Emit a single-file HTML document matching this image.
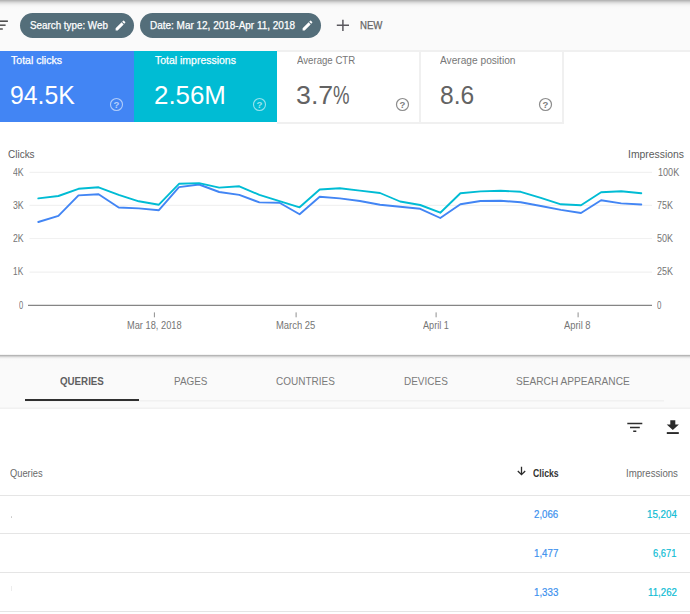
<!DOCTYPE html>
<html>
<head>
<meta charset="utf-8">
<title>Search Console - Performance</title>
<style>
*{box-sizing:border-box;margin:0;padding:0}
html,body{width:690px;height:614px;overflow:hidden;background:#fff}
body{font-family:"Liberation Sans",sans-serif;position:relative;color:#616161}
.abs{position:absolute}
.t{position:absolute;white-space:nowrap;transform-origin:0 50%}
.m{-webkit-text-stroke:0.25px currentColor}
.n{-webkit-text-stroke:0.18px currentColor}
#topbar{left:0;top:0;width:690px;height:51px;background:#fafafa}
#topshadow{left:0;top:0;width:690px;height:9px;background:linear-gradient(to bottom,#b0b0b0 0,#b6b6b6 0.5px,#c8c8c8 1.5px,#d9d9d9 2.5px,#e5e5e5 3.5px,#eeeeee 4.5px,#f4f4f4 5.5px,#f7f7f7 6.5px,#f9f9f9 7.5px,#fafafa 9px)}
.pill{top:12.5px;height:25px;border-radius:12.5px;background:#546e7a}
.card{top:51px;height:71px}
.wcard{background:#fff;border-right:2px solid #f0f0f0;border-bottom:2px solid #f0f0f0;height:72.6px}
.rowline{left:0;width:690px;height:1px;background:#e5e5e5}
</style>
</head>
<body>
<!-- top filter bar -->
<div class="abs" id="topbar"></div>
<div class="abs" id="topshadow"></div>
<svg class="abs" style="left:0;top:18px" width="12" height="14" viewBox="0 18 12 14">
  <rect x="0" y="20.4" width="7.9" height="1.6" fill="#4f4f4f"/>
  <rect x="0" y="24.4" width="5.6" height="1.6" fill="#5a5a5a"/>
  <rect x="0" y="28.2" width="2.8" height="1.6" fill="#606060"/>
</svg>
<div class="abs pill" style="left:20px;width:114px"></div>
<svg class="abs" style="left:114px;top:19px" width="13" height="13" viewBox="0 0 24 24"><path fill="#fff" d="M3 17.25V21h3.75L17.81 9.94l-3.75-3.75L3 17.25zM20.71 7.04a1 1 0 0 0 0-1.41l-2.34-2.34a1 1 0 0 0-1.41 0l-1.83 1.83 3.75 3.75 1.83-1.83z"/></svg>
<div class="abs pill" style="left:140px;width:181px"></div>
<svg class="abs" style="left:301px;top:19px" width="13" height="13" viewBox="0 0 24 24"><path fill="#fff" d="M3 17.25V21h3.75L17.81 9.94l-3.75-3.75L3 17.25zM20.71 7.04a1 1 0 0 0 0-1.41l-2.34-2.34a1 1 0 0 0-1.41 0l-1.83 1.83 3.75 3.75 1.83-1.83z"/></svg>
<svg class="abs" style="left:336px;top:19px" width="14" height="13" viewBox="336 19 14 13"><path d="M342.9 19.7V30.9M336.8 25.3H349" stroke="#5a585e" stroke-width="1.5" fill="none"/></svg>

<!-- metric cards -->
<div class="abs card" style="left:0;width:134px;background:#4285f4"></div>
<div class="abs card" style="left:134px;width:143px;background:#00bcd4"></div>
<div class="abs card wcard" style="left:277px;width:144px"></div>
<div class="abs card wcard" style="left:421px;width:143px"></div>
<div class="abs" style="left:277px;top:49.8px;width:413px;height:2px;background:#f0f0f0"></div>
<svg class="abs" style="left:109px;top:97px" width="15" height="15" viewBox="0 0 15 15"><circle cx="7.5" cy="7.5" r="6" fill="none" stroke="#fff" stroke-opacity=".58" stroke-width="1.1"/><text x="7.5" y="10.9" font-size="9.6" font-weight="bold" text-anchor="middle" fill="#fff" fill-opacity=".62" font-family="Liberation Sans">?</text></svg>
<svg class="abs" style="left:252.4px;top:97px" width="15" height="15" viewBox="0 0 15 15"><circle cx="7.5" cy="7.5" r="6" fill="none" stroke="#fff" stroke-opacity=".58" stroke-width="1.1"/><text x="7.5" y="10.9" font-size="9.6" font-weight="bold" text-anchor="middle" fill="#fff" fill-opacity=".62" font-family="Liberation Sans">?</text></svg>
<svg class="abs" style="left:394.6px;top:97px" width="15" height="15" viewBox="0 0 15 15"><circle cx="7.5" cy="7.5" r="6" fill="none" stroke="#8c8c8c" stroke-width="1.2"/><text x="7.5" y="10.9" font-size="9.6" font-weight="bold" text-anchor="middle" fill="#808080" font-family="Liberation Sans">?</text></svg>
<svg class="abs" style="left:538px;top:97px" width="15" height="15" viewBox="0 0 15 15"><circle cx="7.5" cy="7.5" r="6" fill="none" stroke="#8c8c8c" stroke-width="1.2"/><text x="7.5" y="10.9" font-size="9.6" font-weight="bold" text-anchor="middle" fill="#808080" font-family="Liberation Sans">?</text></svg>

<!-- chart -->
<svg class="abs" style="left:0;top:140px" width="690" height="200" viewBox="0 140 690 200">
  <g stroke="#f1f1f1" stroke-width="1.2">
    <path d="M29.5 172.4H652M29.5 205.4H652M29.5 238.5H652M29.5 272.1H652"/>
  </g>
  <path d="M28 305.4H652" stroke="#858585" stroke-width="1.3"/>
  <path d="M154.4 312.4V317.3M296.1 312.4V317.3M436.1 312.4V317.3M578.1 312.4V317.3" stroke="#8f8f8f" stroke-width="1"/>
  <polyline fill="none" stroke="#4285f4" stroke-width="1.9" stroke-linejoin="round" stroke-linecap="round" points="38.3,222.0 58.4,215.8 78.5,195.4 98.6,194.2 118.7,207.5 138.8,208.4 158.9,210.2 179.0,187.1 199.1,184.5 219.2,192.0 239.3,194.9 259.4,202.4 279.5,202.7 299.6,214.2 319.7,196.7 339.8,198.4 359.9,201.0 380.0,204.7 400.1,206.7 420.2,208.8 440.3,218.0 460.4,204.3 480.5,201.0 500.6,200.8 520.7,202.2 540.8,206.0 560.9,209.9 581.0,213.0 601.1,200.3 621.2,203.4 641.3,204.5"/>
  <polyline fill="none" stroke="#00bcd4" stroke-width="1.9" stroke-linejoin="round" stroke-linecap="round" points="38.3,198.4 58.4,196.0 78.5,188.8 98.6,187.3 118.7,194.9 138.8,201.3 158.9,204.7 179.0,183.8 199.1,183.1 219.2,187.6 239.3,186.3 259.4,194.9 279.5,201.2 299.6,207.3 319.7,189.5 339.8,188.3 359.9,190.6 380.0,193.0 400.1,201.5 420.2,205.0 440.3,212.7 460.4,193.2 480.5,191.4 500.6,190.7 520.7,191.8 540.8,197.8 560.9,204.3 581.0,205.2 601.1,192.3 621.2,191.3 641.3,193.2"/>
</svg>

<!-- tabs band -->
<div class="abs" style="left:0;top:355px;width:690px;height:54px;background:#fafafa"></div>
<div class="abs" style="left:0;top:354px;width:690px;height:7px;background:linear-gradient(to bottom,#ffffff 0,#f0f0f0 0.7px,#b6b6b6 1.5px,#d2d2d2 2.5px,#e9e9e9 3.5px,#f4f4f4 4.5px,#f9f9f9 5.5px,#fafafa 7px)"></div>
<div class="abs" style="left:25px;top:400px;width:639px;height:2px;background:linear-gradient(to bottom,#f1f1f1 0,#f1f1f1 50%,#f5f5f5 50%,#f5f5f5 100%)"></div>
<div class="abs" style="left:0;top:407px;width:690px;height:2px;background:linear-gradient(to bottom,#f5f5f5 0,#f5f5f5 50%,#f1f1f1 50%,#f1f1f1 100%)"></div>
<div class="abs" style="left:25px;top:398.9px;width:113.8px;height:2.1px;background:#303030"></div>

<!-- table toolbar icons -->
<svg class="abs" style="left:626px;top:420px" width="18" height="16" viewBox="0 0 18 16">
  <path d="M1.3 3.6H16.3M4 7.5H13.8M7.2 11.2H10.3" stroke="#2e2e2e" stroke-width="1.5" fill="none"/>
</svg>
<svg class="abs" style="left:665px;top:419px" width="16" height="16" viewBox="0 0 16 16">
  <path d="M5.3 1.2H10.3V5.4H13.9L7.8 11 1.7 5.4H5.3Z" fill="#2b2b2b"/>
  <rect x="1.8" y="13.1" width="12" height="1.9" fill="#2b2b2b"/>
</svg>
<svg class="abs" style="left:516px;top:466px" width="11" height="10" viewBox="0 0 11 10"><path d="M5.5 0.8V8.5M1.8 5L5.5 8.7 9.2 5" stroke="#2b2b2b" stroke-width="1.3" fill="none"/></svg>

<div class="abs rowline" style="top:495px"></div>
<div class="abs rowline" style="top:533px"></div>
<div class="abs rowline" style="top:572px"></div>
<div class="abs rowline" style="top:611px"></div>

<div class="abs" style="left:10.6px;top:516px;width:1.6px;height:2px;background:#c9c9c9;border-radius:1px"></div>
<div class="abs" style="left:10.5px;top:586px;width:1.5px;height:5px;background:#ededed"></div>
<!-- text -->
<div class="t m" style="left:29.70px;top:20px;font-size:10.0px;line-height:12px;color:#fff;transform:scaleX(0.9819)">Search type: Web</div>
<div class="t m" style="left:149.60px;top:20px;font-size:10.0px;line-height:12px;color:#fff;transform:scaleX(0.9966)">Date: Mar 12, 2018-Apr 11, 2018</div>
<div class="t m" style="left:360.00px;top:19px;font-size:10.4px;line-height:13px;color:#666;transform:scaleX(0.9249)">NEW</div>
<div class="t m" style="left:11.20px;top:54px;font-size:10.6px;line-height:13px;color:#fff;transform:scaleX(0.9957)">Total clicks</div>
<div class="t" style="left:10.26px;top:79px;font-size:26.4px;line-height:32px;color:#fff;transform:scaleX(0.9406)">94.5K</div>
<div class="t m" style="left:154.60px;top:54px;font-size:10.6px;line-height:13px;color:#fff;transform:scaleX(0.9885)">Total impressions</div>
<div class="t" style="left:153.52px;top:79px;font-size:26.4px;line-height:32px;color:#fff;transform:scaleX(0.9806)">2.56M</div>
<div class="t" style="left:296.50px;top:54px;font-size:10.6px;line-height:13px;color:#777;transform:scaleX(0.9094)">Average CTR</div>
<div class="t" style="left:296.09px;top:79px;font-size:26.4px;line-height:32px;color:#636363;transform:scaleX(1.0140)">3.7</div>
<div class="t" style="left:333.10px;top:79px;font-size:26.4px;line-height:32px;color:#636363;transform:scaleX(0.7043)">%</div>
<div class="t" style="left:440.00px;top:54px;font-size:10.6px;line-height:13px;color:#777;transform:scaleX(0.9590)">Average position</div>
<div class="t" style="left:439.67px;top:79px;font-size:26.4px;line-height:32px;color:#636363;transform:scaleX(0.9312)">8.6</div>
<div class="t" style="left:7.80px;top:149px;font-size:10.0px;line-height:12px;color:#5c5c5c;transform:scaleX(0.9976)">Clicks</div>
<div class="t" style="left:627.60px;top:149px;font-size:10.0px;line-height:12px;color:#5c5c5c;transform:scaleX(1.0388)">Impressions</div>
<div class="t" style="left:12.70px;top:166px;font-size:10.3px;line-height:13px;color:#757575;transform:scaleX(0.8486)">4K</div>
<div class="t" style="left:12.70px;top:199px;font-size:10.3px;line-height:13px;color:#757575;transform:scaleX(0.8486)">3K</div>
<div class="t" style="left:12.70px;top:232px;font-size:10.3px;line-height:13px;color:#757575;transform:scaleX(0.8486)">2K</div>
<div class="t" style="left:13.20px;top:265px;font-size:10.3px;line-height:13px;color:#757575;transform:scaleX(0.8093)">1K</div>
<div class="t" style="left:18.80px;top:299px;font-size:10.3px;line-height:13px;color:#757575;transform:scaleX(0.7333)">0</div>
<div class="t" style="left:657.90px;top:166px;font-size:10.3px;line-height:13px;color:#757575;transform:scaleX(0.8809)">100K</div>
<div class="t" style="left:657.20px;top:199px;font-size:10.3px;line-height:13px;color:#757575;transform:scaleX(0.8725)">75K</div>
<div class="t" style="left:657.20px;top:232px;font-size:10.3px;line-height:13px;color:#757575;transform:scaleX(0.8725)">50K</div>
<div class="t" style="left:657.20px;top:265px;font-size:10.3px;line-height:13px;color:#757575;transform:scaleX(0.8725)">25K</div>
<div class="t" style="left:657.40px;top:299px;font-size:10.3px;line-height:13px;color:#757575;transform:scaleX(0.7667)">0</div>
<div class="t" style="left:126.70px;top:320px;font-size:10.0px;line-height:12px;color:#757575;transform:scaleX(0.9265)">Mar 18, 2018</div>
<div class="t" style="left:276.00px;top:320px;font-size:10.0px;line-height:12px;color:#757575;transform:scaleX(0.9425)">March 25</div>
<div class="t" style="left:422.70px;top:320px;font-size:10.0px;line-height:12px;color:#757575;transform:scaleX(0.9137)">April 1</div>
<div class="t" style="left:564.30px;top:320px;font-size:10.0px;line-height:12px;color:#757575;transform:scaleX(0.9380)">April 8</div>
<div class="t" style="left:60.10px;top:375px;font-size:10.7px;line-height:13px;color:#5f5f5f;transform:scaleX(0.9109);font-weight:bold">QUERIES</div>
<div class="t" style="left:173.70px;top:375px;font-size:10.7px;line-height:13px;color:#7a7a7a;transform:scaleX(0.9275)">PAGES</div>
<div class="t" style="left:276.00px;top:375px;font-size:10.7px;line-height:13px;color:#7a7a7a;transform:scaleX(0.9345)">COUNTRIES</div>
<div class="t" style="left:403.60px;top:375px;font-size:10.7px;line-height:13px;color:#7a7a7a;transform:scaleX(0.9339)">DEVICES</div>
<div class="t" style="left:516.20px;top:375px;font-size:10.7px;line-height:13px;color:#7a7a7a;transform:scaleX(0.9482)">SEARCH APPEARANCE</div>
<div class="t" style="left:10.30px;top:467px;font-size:10.3px;line-height:13px;color:#6a6a6a;transform:scaleX(0.9051)">Queries</div>
<div class="t" style="left:532.50px;top:467px;font-size:10.3px;line-height:13px;color:#333;transform:scaleX(0.8461);font-weight:bold">Clicks</div>
<div class="t" style="left:625.70px;top:467px;font-size:10.3px;line-height:13px;color:#6a6a6a;transform:scaleX(0.9357)">Impressions</div>
<div class="t n" style="left:533.90px;top:508px;font-size:10.5px;line-height:13px;color:#3a90ee;transform:scaleX(0.9230)">2,066</div>
<div class="t n" style="left:647.40px;top:508px;font-size:10.5px;line-height:13px;color:#0cbcd4;transform:scaleX(0.9295)">15,204</div>
<div class="t n" style="left:534.00px;top:547px;font-size:10.5px;line-height:13px;color:#3a90ee;transform:scaleX(0.9268)">1,477</div>
<div class="t n" style="left:652.90px;top:547px;font-size:10.5px;line-height:13px;color:#0cbcd4;transform:scaleX(0.8927)">6,671</div>
<div class="t n" style="left:534.00px;top:586px;font-size:10.5px;line-height:13px;color:#3a90ee;transform:scaleX(0.9268)">1,333</div>
<div class="t n" style="left:648.10px;top:586px;font-size:10.5px;line-height:13px;color:#0cbcd4;transform:scaleX(0.9239)">11,262</div>
</body>
</html>
